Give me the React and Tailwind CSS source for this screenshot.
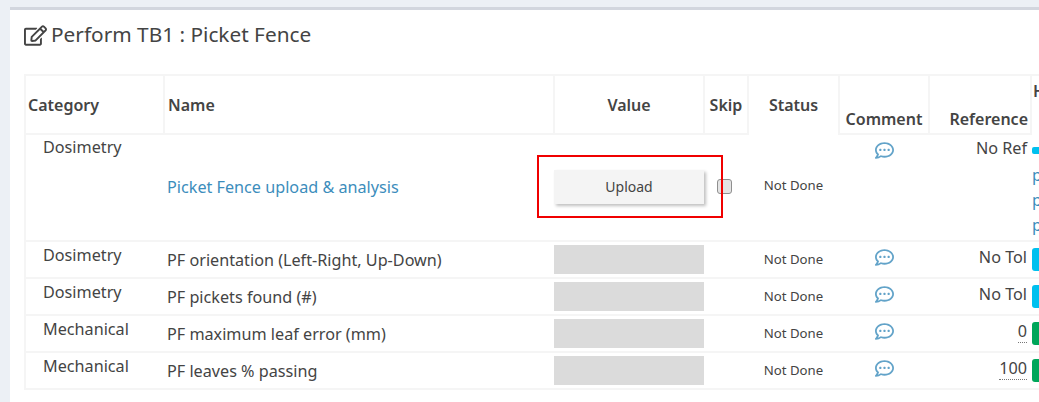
import { FaRegCommentDots, FaRegEdit } from 'react-icons/fa';

const rows = [
  { category: 'Dosimetry', name: 'PF orientation (Left-Right, Up-Down)', reference: 'No Tol', badge: 'bg-[#00c0ef]' },
  { category: 'Dosimetry', name: 'PF pickets found (#)', reference: 'No Tol', badge: 'bg-[#00c0ef]' },
  { category: 'Mechanical', name: 'PF maximum leaf error (mm)', reference: '0', badge: 'bg-[#00a65a]', dotted: true },
  { category: 'Mechanical', name: 'PF leaves % passing', reference: '100', badge: 'bg-[#00a65a]', dotted: true },
];

function CommentIcon() {
  return <FaRegCommentDots className="mx-auto size-[19px] text-[#3c8dbc] opacity-80" />;
}

function Row({ row }) {
  return (
    <tr className="h-[37px] border-b-2 border-l-2 border-[#f5f5f5] text-[16.2px] text-[#444]">
      <td className="px-[17px] pb-[10px] align-middle leading-5">{row.category}</td>
      <td className="pl-[3px] pt-px align-middle">{row.name}</td>
      <td className="p-0 align-middle">
        <div className="h-[29px] bg-[#dbdbdb]" />
      </td>
      <td />
      <td className="text-center align-middle text-[13.2px]">Not Done</td>
      <td className="pb-[5px] align-middle"><CommentIcon /></td>
      <td className="pb-[5px] pr-[4px] text-right align-middle">
        <span className={row.dotted ? 'border-b border-dotted border-[#777]' : ''}>{row.reference}</span>
      </td>
      <td className="p-0 pl-px align-middle">
        <div className={`h-[23px] rounded-l-[3px] ${row.badge}`} />
      </td>
    </tr>
  );
}

export default function App() {
  return (
    <div className="h-[402px] w-[1039px] overflow-hidden bg-[#ecf0f5] pl-[10px] pt-[7px] font-['Noto_Sans','Lato',sans-serif]">
      <div className="relative h-[395px] border-t-[3px] border-[#d2d6de] bg-white pl-[14px]">
        <h3 className="flex h-[46px] items-center gap-[4px] pt-[4px] text-[20.8px] text-[#444]">
          <FaRegEdit className="size-[23px]" />
          Perform TB1 : Picket Fence
        </h3>

        <table className="mt-[18px] w-[1100px] table-fixed border-collapse text-[#444]">
          <colgroup>
            <col className="w-[139px]" />
            <col className="w-[390px]" />
            <col className="w-[150px]" />
            <col className="w-[44px]" />
            <col className="w-[91px]" />
            <col className="w-[90px]" />
            <col className="w-[102px]" />
            <col />
          </colgroup>
          <thead>
            <tr className="h-[59px] border-t-2 border-l-2 border-[#f5f5f5] text-[16px]">
              <th className="border-b-2 border-r-2 border-[#f5f5f5] pl-[2px] text-left font-semibold">Category</th>
              <th className="border-b-2 border-r-2 border-[#f5f5f5] pl-[3px] text-left font-semibold">Name</th>
              <th className="border-b-2 border-r-2 border-[#f5f5f5] text-center font-semibold">Value</th>
              <th className="border-b-2 border-r-2 border-[#f5f5f5] text-center font-semibold">Skip</th>
              <th className="border-r-2 border-[#f5f5f5] text-center font-semibold">Status</th>
              <th className="border-b-2 border-r-2 border-[#f5f5f5] pt-[28px] text-center font-semibold">Comment</th>
              <th className="border-b-2 border-r-2 border-[#f5f5f5] pr-[2px] pt-[28px] text-right font-semibold">Reference</th>
              <th className="pb-[28px] pl-px text-left font-semibold">H</th>
            </tr>
          </thead>
          <tbody>
            <tr className="h-[107px] border-b-2 border-l-2 border-[#f5f5f5] text-[16.2px] text-[#444]">
              <td className="px-[17px] pt-[2px] align-top leading-5">Dosimetry</td>
              <td className="pl-[3px] align-middle text-[#3c8dbc]">Picket Fence upload &amp; analysis</td>
              <td className="p-0 pb-[2px] align-middle">
                <button className="h-[34px] w-[150px] bg-[#f4f4f4] text-[14px] text-[#444] shadow-[2px_2px_3px_rgba(0,0,0,0.25)]">Upload</button>
              </td>
              <td className="pb-[2px] pl-[13px] align-middle">
                <div className="size-[15px] rounded-[3px] border border-[#8f8f8f] bg-[#e4e4e4]" />
              </td>
              <td className="pb-[2px] text-center align-middle text-[13.2px]">Not Done</td>
              <td className="pt-[6px] align-top"><CommentIcon /></td>
              <td className="pt-[3px] pr-[4px] text-right align-top leading-5">No Ref</td>
              <td className="pl-px pt-[13px] align-top leading-[25px] text-[#3c8dbc]">
                <div className="mb-[9px] h-[7px] rounded-l-[2px] bg-[#00c0ef]" />
                <div>p</div>
                <div>p</div>
                <div>p</div>
              </td>
            </tr>
            {rows.map((row) => <Row key={row.name} row={row} />)}
          </tbody>
        </table>

        <div className="absolute left-[527px] top-[145px] h-[63px] w-[186px] border-2 border-[#f00000]" />
      </div>
    </div>
  );
}
